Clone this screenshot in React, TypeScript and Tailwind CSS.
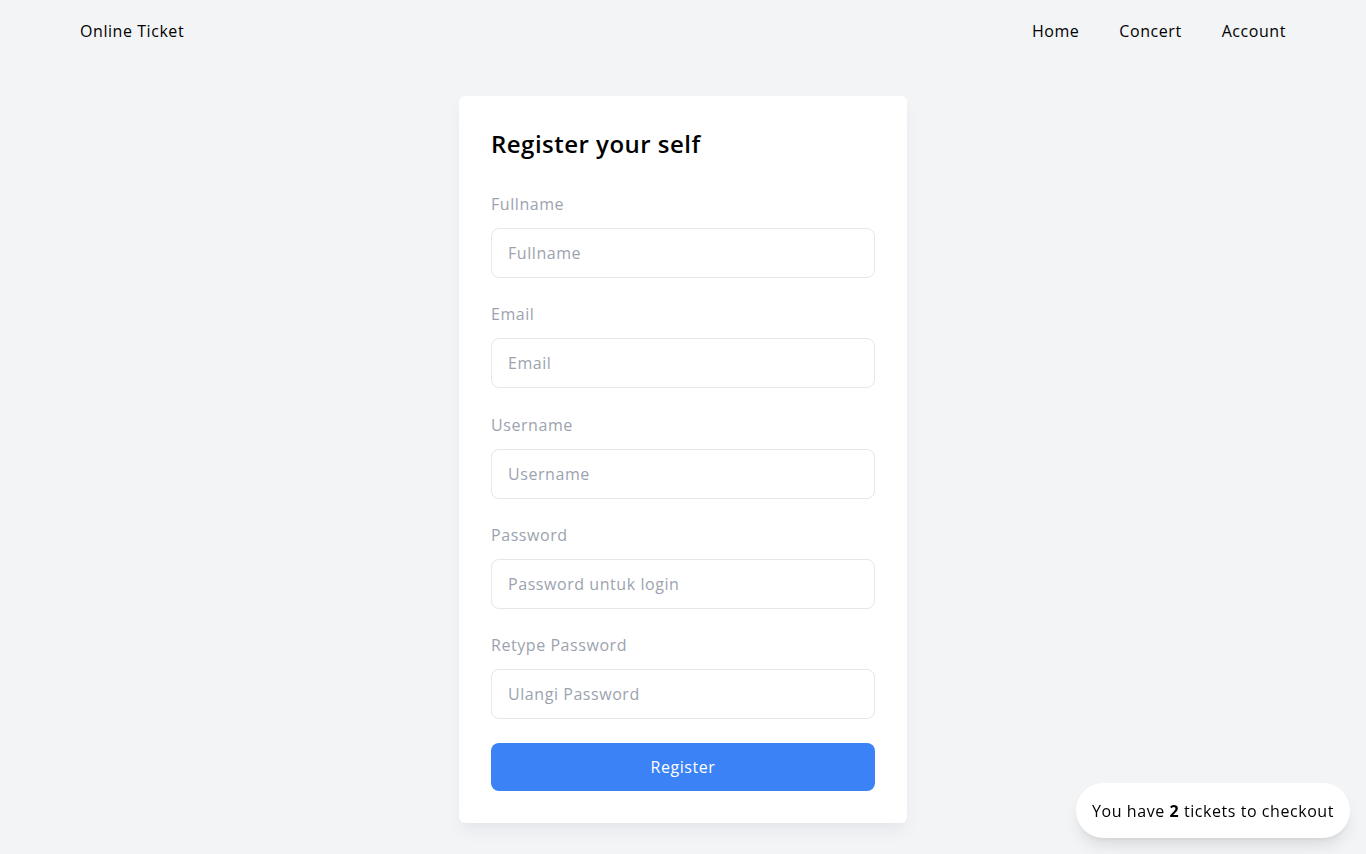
import React from "react";

const fields = [
  { label: "Fullname", placeholder: "Fullname", type: "text" },
  { label: "Email", placeholder: "Email", type: "email" },
  { label: "Username", placeholder: "Username", type: "text" },
  { label: "Password", placeholder: "Password untuk login", type: "password" },
  { label: "Retype Password", placeholder: "Ulangi Password", type: "password" },
];

export default function App() {
  return (
    <div
      className="min-h-screen bg-[#f3f4f6] tracking-[0.035em] text-black"
      style={{ fontFamily: '"Open Sans", "Liberation Sans", sans-serif' }}
    >
      {/* top nav */}
      <nav className="flex h-[62px] items-center justify-between px-20 text-base">
        <span>Online Ticket</span>
        <ul className="flex items-center gap-10">
          <li>Home</li>
          <li>Concert</li>
          <li>Account</li>
        </ul>
      </nav>

      <main className="flex justify-center pt-[34px] pb-8">
        <div className="w-[448px] rounded-md bg-white p-8 shadow-lg shadow-gray-200">
          <h1 className="text-2xl font-semibold leading-8 tracking-[0.02em]">Register your self</h1>
          <form className="mt-[32px] flex flex-col gap-[24.25px]">
            {fields.map((f) => (
              <div key={f.label} className="flex flex-col gap-3">
                <label className="text-base leading-6 text-[#9ca3af]">{f.label}</label>
                <input
                  type={f.type}
                  placeholder={f.placeholder}
                  className="h-[50px] w-full rounded-lg border border-[#e5e7eb] px-4 text-base tracking-[0.035em] outline-none placeholder:text-[#9ca3af]"
                />
              </div>
            ))}
            <button
              type="button"
              className="h-12 w-full rounded-lg bg-[#3b82f6] text-base tracking-[0.035em] text-white"
            >
              Register
            </button>
          </form>
        </div>
      </main>

      {/* checkout reminder */}
      <div className="fixed right-4 bottom-4 flex h-[55px] items-center rounded-full bg-white px-4 text-base shadow-lg">
        <span>
          You have <b>2</b> tickets to checkout
        </span>
      </div>
    </div>
  );
}
